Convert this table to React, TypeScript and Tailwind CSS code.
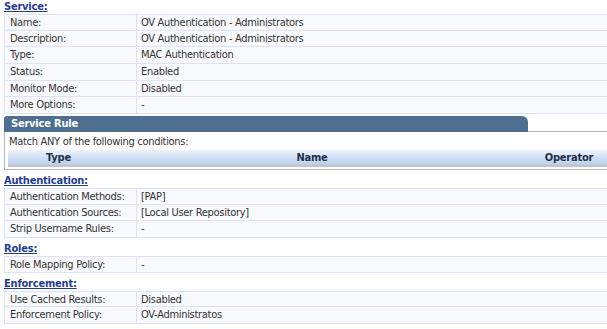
import React from 'react';

type Row = [string, string];

const font = { fontFamily: '"DejaVu Sans Condensed", Tahoma, "DejaVu Sans", sans-serif' };

const SectionTitle: React.FC<{ title: string; first?: boolean }> = ({ title, first }) => (
  <div className={`h-[13px] pl-[4px] text-[11px] leading-[12px] font-bold tracking-[-0.2px] text-[#1f3c94] underline ${first ? '' : 'mt-[5px]'}`}>
    {title}
  </div>
);

const InfoTable: React.FC<{ rows: Row[] }> = ({ rows }) => (
  <div className="ml-[4px] flex flex-col">
    {rows.map(([label, value], i) => (
      <div key={label} className={`flex h-[16.67px] ${i === 0 ? 'border-t' : ''} border-b border-[#dbe3f4]`}>
        <div className="w-[133px] shrink-0 border-l border-r border-[#dbe3f4] bg-[#f9fafe] pl-[5px] text-[11px] leading-[16px] tracking-[-0.3px] text-[#333]">
          {label}
        </div>
        <div className="flex-1 bg-[#f9fafe] pl-[4px] text-[11px] leading-[16px] tracking-[-0.3px] text-[#333]">{value}</div>
      </div>
    ))}
  </div>
);

export default function App() {
  return (
    <div className="w-[607px] h-[329px] overflow-hidden bg-white" style={font}>
      <div className="w-[640px] pt-[1px]">
        <SectionTitle title="Service:" first />
        <InfoTable
          rows={[
            ['Name:', 'OV Authentication - Administrators'],
            ['Description:', 'OV Authentication - Administrators'],
            ['Type:', 'MAC Authentication'],
            ['Status:', 'Enabled'],
            ['Monitor Mode:', 'Disabled'],
            ['More Options:', '-'],
          ]}
        />

        {/* service rule panel */}
        <div className="ml-[4px] mt-[2px] w-[622px]">
          <div className="flex h-[16px]">
            <div className="w-[524px] rounded-tl-[3px] rounded-tr-[6px] bg-[#4f6f91] pl-[7px] text-[11px] leading-[16px] font-bold tracking-[-0.2px] text-white">
              Service Rule
            </div>
            <div className="flex-1 border-b border-[#b8b8b8]" />
          </div>
          <div className="border-l border-b border-[#b8b8b8] pb-[2px] pl-[3px]">
            <div className="h-[18px] pl-[1px] pt-[2px] text-[11px] leading-[15px] tracking-[-0.3px] text-[#333]">
              Match ANY of the following conditions:
            </div>
            <div className="flex h-[17px] border-b-2 border-[#c4c4c4] bg-gradient-to-b from-[#eef3fc] to-[#b9cdec] text-[11px] leading-[16px] font-bold tracking-[-0.2px] text-[#1f2f4a]">
              <div className="w-[101px] text-center">Type</div>
              <div className="w-[406px] text-center">Name</div>
              <div className="w-[108px] text-center">Operator</div>
            </div>
          </div>
        </div>

        <SectionTitle title="Authentication:" />
        <InfoTable
          rows={[
            ['Authentication Methods:', '[PAP]'],
            ['Authentication Sources:', '[Local User Repository]'],
            ['Strip Username Rules:', '-'],
          ]}
        />

        <SectionTitle title="Roles:" />
        <InfoTable rows={[['Role Mapping Policy:', '-']]} />

        <SectionTitle title="Enforcement:" />
        <InfoTable
          rows={[
            ['Use Cached Results:', 'Disabled'],
            ['Enforcement Policy:', 'OV-Administratos'],
          ]}
        />
      </div>
    </div>
  );
}
